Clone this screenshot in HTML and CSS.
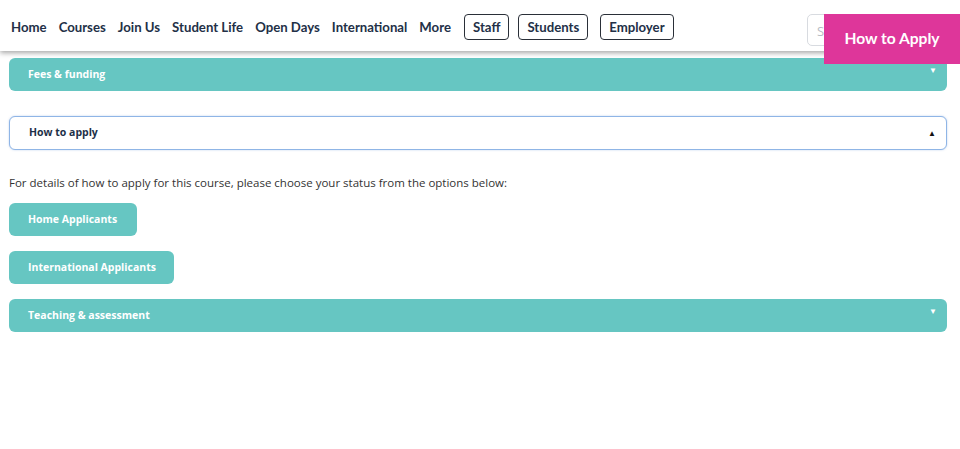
FILE: index.html
```html
<!DOCTYPE html>
<html>
<head>
<meta charset="utf-8">
<link rel="stylesheet" href="styles.css">
</head>
<body>
<header class="header">
  <nav class="nav">
    <a class="nav-link">Home</a>
    <a class="nav-link">Courses</a>
    <a class="nav-link">Join Us</a>
    <a class="nav-link">Student Life</a>
    <a class="nav-link">Open Days</a>
    <a class="nav-link">International</a>
    <a class="nav-link">More</a>
    <a class="nav-btn staff">Staff</a>
    <a class="nav-btn students">Students</a>
    <a class="nav-btn employer">Employer</a>
  </nav>
  <div class="search">S</div>
  <a class="apply">How to Apply</a>
</header>
<main class="content">
  <div class="acc closed fees"><span>Fees &amp; funding</span><span class="arrow">▼</span></div>
  <div class="acc open"><span>How to apply</span><span class="arrow dark">▲</span></div>
  <p class="intro">For details of how to apply for this course, please choose your status from the options below:</p>
  <a class="pill home">Home Applicants</a>
  <a class="pill intl">International Applicants</a>
  <div class="acc closed teach"><span>Teaching &amp; assessment</span><span class="arrow">▼</span></div>
</main>
</body>
</html>
```
FILE: styles.css
```css
* { box-sizing: border-box; }
body {
  margin: 0;
  font-family: "Open Sans", "Liberation Sans", sans-serif;
  background: #fff;
  width: 960px;
  height: 449px;
  overflow: hidden;
}
.header {
  position: relative;
  height: 51px;
  background: #fff;
  box-shadow: 0 2px 5px rgba(0,0,0,0.35);
  display: flex;
  align-items: flex-start;
  z-index: 2;
}
.nav {
  display: flex;
  align-items: center;
  padding-left: 11px;
  padding-top: 14px;
  height: 40px;
  font-family: Lato, "Open Sans", sans-serif;
}
.nav-link {
  font-size: 13.2px;
  font-weight: 700;
  color: #233047;
  margin-right: 12px;
  white-space: nowrap;
}
.nav-btn {
  font-size: 13.2px;
  font-weight: 700;
  color: #233047;
  border: 1.3px solid #2a2f38;
  border-radius: 4px;
  height: 26px;
  display: flex;
  align-items: center;
  padding: 0 8px;
  margin-right: 9px;
  white-space: nowrap;
}
.nav-btn.staff { margin-left: 1px; }
.nav-btn.students { margin-right: 12px; }
.search {
  position: absolute;
  left: 807px;
  top: 14px;
  width: 40px;
  height: 32px;
  border: 1px solid #d8dbe0;
  border-radius: 5px;
  color: #b8bcc4;
  font-size: 13px;
  padding: 7px 0 0 9px;
}
.apply {
  position: absolute;
  left: 824px;
  top: 14px;
  width: 136px;
  height: 50px;
  background: #de369a;
  color: #fff;
  font-family: Lato, "Open Sans", sans-serif;
  font-size: 15.6px;
  font-weight: 700;
  display: flex;
  align-items: center;
  justify-content: center;
  padding-bottom: 2px;
  z-index: 3;
}
.content {
  padding: 7px 13px 0 9px;
  display: flex;
  flex-direction: column;
  align-items: flex-start;
}
.acc {
  width: 938px;
  height: 33px;
  border-radius: 6px;
  display: flex;
  align-items: center;
  justify-content: space-between;
  padding: 0 10px 2px 19px;
  font-size: 10.5px;
  font-weight: 700;
}
.acc.closed { background: #66c6c2; color: #fff; }
.acc.fees { margin-bottom: 25px; }
.acc.open {
  background: #fff;
  border: 1.5px solid #8fb5e6;
  color: #1d3048;
  height: 34px;
  padding-left: 19px;
  box-shadow: 0 0 2px rgba(120,160,220,0.5);
}
.arrow { font-size: 8px; color: #fff; padding-bottom: 6px; }
.acc.closed .arrow { padding-bottom: 8px; }
.arrow.dark { color: #111; padding-bottom: 0; }
.intro {
  margin: 25px 0 13px 0;
  font-size: 11.5px;
  color: #333;
  font-weight: 400;
}
.pill {
  background: #66c6c2;
  color: #fff;
  font-size: 10.5px;
  font-weight: 700;
  height: 33px;
  border-radius: 6px;
  display: flex;
  align-items: center;
  padding: 0 19px 2px;
  margin-bottom: 15px;
  white-space: nowrap;
}
.pill.home { width: 128px; }
.pill.intl { width: 165px; }
```
